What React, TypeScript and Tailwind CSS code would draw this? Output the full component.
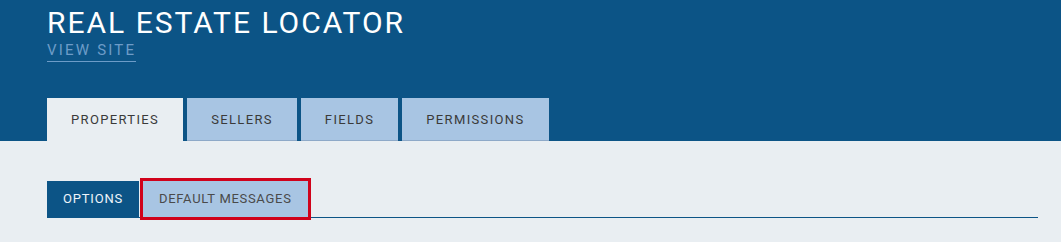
import { useState } from 'react'

const mainTabs = ['PROPERTIES', 'SELLERS', 'FIELDS', 'PERMISSIONS']
const subTabs = ['OPTIONS', 'DEFAULT MESSAGES']

export default function App() {
  const [tab, setTab] = useState('PROPERTIES')
  const [sub, setSub] = useState('OPTIONS')

  return (
    <div className="min-h-[242px] bg-[#e9eef2] font-['Roboto','Liberation_Sans',sans-serif]">
      <header className="bg-[#0c5486] px-[47px] pt-[5px]">
        <h1 className="text-[30px] leading-[36px] tracking-[2px] text-white">REAL ESTATE LOCATOR</h1>
        <a
          href="#"
          className="block w-fit border-b border-[#6d9cc8] pb-[2px] text-[15px] leading-[18px] tracking-[2.2px] text-[#6d9cc8]"
        >
          VIEW SITE
        </a>
        <nav className="mt-[36px] flex gap-1">
          {mainTabs.map((t) => (
            <button
              key={t}
              onClick={() => setTab(t)}
              className={
                t === tab
                  ? 'flex h-[43px] items-center bg-[#e9eef2] px-6 text-[13px] tracking-[1.35px] text-[#3a3a3a]'
                  : 'flex h-[43px] items-center border-b border-[#8ea9c8] bg-[#a8c5e3] px-6 pt-px text-[13px] tracking-[1.35px] text-[#3a3a3a]'
              }
            >
              {t}
            </button>
          ))}
        </nav>
      </header>

      <div className="pl-[47px] pr-[23px] pt-[40px]">
        <div className="flex gap-1 border-b border-[#0c5486]">
          {subTabs.map((t) => (
            <button
              key={t}
              onClick={() => setSub(t)}
              className={
                t === sub
                  ? 'flex h-[36px] items-center bg-[#0c5486] px-4 text-[13px] tracking-[0.8px] text-[#eef4fa]'
                  : 'flex h-[36px] items-center bg-[#a8c5e3] px-4 text-[13px] tracking-[0.7px] text-[#4a4a4a] outline-[3px] outline-solid outline-[#d0021b]'
              }
            >
              {t}
            </button>
          ))}
        </div>
      </div>
    </div>
  )
}
